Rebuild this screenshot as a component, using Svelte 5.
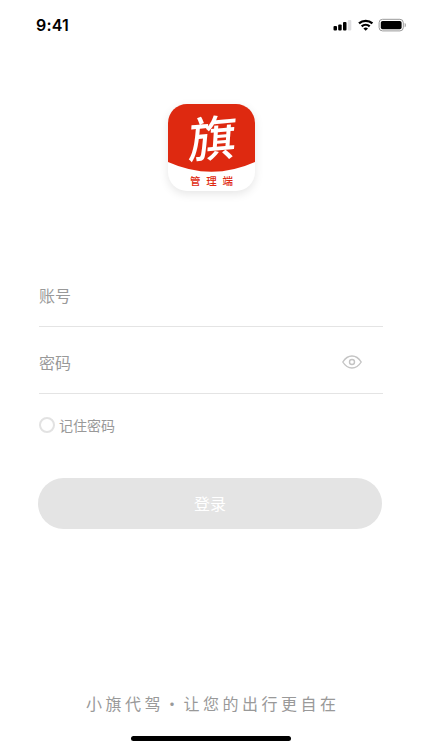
<script lang="ts">
	let account = $state('');
	let password = $state('');
	let remember = $state(false);
	let showPassword = $state(false);

	function handleSubmit(event: SubmitEvent) {
		event.preventDefault();
	}
</script>

<div class="screen">
	<header class="status-bar">
		<span class="time">9:41</span>
		<svg class="status-icons" width="74" height="14" viewBox="0 0 74 14" aria-hidden="true">
			<rect x="0.5" y="8" width="3.5" height="4.5" rx="1" />
			<rect x="5.2" y="6.5" width="3.5" height="6" rx="1" />
			<rect x="10" y="4" width="3.5" height="8.5" rx="1" />
			<rect x="14.8" y="2" width="3.5" height="10.5" rx="1" fill="#dedee0" />
			<g fill="none" stroke="#000" stroke-width="2.3">
				<path d="M26 5.4a10 10 0 0 1 13.4 0" />
				<path d="M28.7 8.4a6 6 0 0 1 8 0" />
			</g>
			<path d="M30.4 10.4a3.6 3.6 0 0 1 4.6 0L32.7 12.8z" />
			<rect x="46.1" y="1.3" width="24.2" height="11.6" rx="3.4" fill="none" stroke="#999" />
			<rect x="47.8" y="3" width="20.8" height="8.2" rx="1.8" />
			<path d="M71.7 5v4.2c1.5-.5 1.5-3.7 0-4.2" fill="#999" />
		</svg>
	</header>

	<div class="logo">
		<svg width="87" height="87" viewBox="0 0 87 87" role="img" aria-label="旗 管理端">
			<path d="M19 0H68A19 19 0 0 1 87 19V58Q43.5 77.5 0 58V19A19 19 0 0 1 19 0z" fill="#de2910" />
			<text class="logo-mark" transform="translate(19.5 54.5) skewY(-5) skewX(-4)">旗</text>
			<text class="logo-label" x="22" y="81">管理端</text>
		</svg>
	</div>

	<form onsubmit={handleSubmit}>
		<div class="field">
			<input type="text" placeholder="账号" bind:value={account} />
		</div>
		<div class="field">
			<input type={showPassword ? 'text' : 'password'} placeholder="密码" bind:value={password} />
			<button
				type="button"
				class="eye"
				aria-label="密码"
				onclick={() => (showPassword = !showPassword)}
			>
				<svg width="20" height="14" viewBox="0 0 20 14" fill="none" stroke="#c4c4c4" stroke-width="1.4">
					<path d="M.8 7C3 3.5 6.2 1 10 1s7 2.5 9.2 6C17 10.5 13.800 13 10 13S3 10.5.8 7z" />
					<circle cx="10" cy="7" r="2.5" />
				</svg>
			</button>
		</div>

		<label class="remember">
			<input type="checkbox" bind:checked={remember} />
			<span>记住密码</span>
		</label>

		<button type="submit" class="submit" class:ready={account && password}>登录</button>
	</form>

	<footer>
		<p>小旗代驾・让您的出行更自在</p>
		<div class="home-indicator"></div>
	</footer>
</div>

<style>
	:global(body) {
		background: #fff;
	}

	.screen {
		display: flex;
		flex-direction: column;
		box-sizing: border-box;
		height: 750px;
		overflow: hidden;
		background: #fff;
		font-family: 'Noto Sans CJK SC', sans-serif;
		color: #999;
	}

	.status-bar {
		display: flex;
		justify-content: space-between;
		align-items: center;
		height: 50px;
		padding: 0 15px 0 36px;
	}

	.time {
		font-family: Inter, sans-serif;
		font-size: 16px;
		font-weight: 600;
		letter-spacing: 0.2px;
		color: #000;
	}

	.logo {
		width: 87px;
		height: 87px;
		margin: 53.5px auto 0 167.5px;
		border-radius: 19px;
		background: #fff;
		box-shadow: 0 3px 10px rgba(0, 0, 0, 0.1);
	}

	.logo svg {
		display: block;
		overflow: visible;
	}

	.logo-mark {
		font-size: 48px;
		font-weight: 500;
		fill: #fff;
	}

	.logo-label {
		font-size: 10.5px;
		font-weight: 500;
		letter-spacing: 5.8px;
		fill: #de2910;
	}

	form {
		padding: 69.5px 39px 0;
	}

	.field {
		display: flex;
		align-items: center;
		box-sizing: border-box;
		height: 67px;
		padding-top: 4px;
		border-bottom: 1px solid #e4e4e4;
	}

	.field input {
		flex: 1;
		min-width: 0;
		height: 24px;
		padding: 0 0 1px;
		border: 0;
		outline: 0;
		background: none;
		font: inherit;
		font-size: 16px;
		color: #333;
	}

	.field input::placeholder {
		color: #999;
		opacity: 1;
	}

	.eye {
		display: flex;
		margin-right: 21px;
		padding: 0;
		border: 0;
		background: none;
	}

	.remember {
		display: flex;
		align-items: center;
		gap: 4px;
		height: 20px;
		margin-top: 21px;
		font-size: 14px;
		line-height: 20px;
	}

	.remember input {
		appearance: none;
		box-sizing: border-box;
		width: 16px;
		height: 16px;
		margin: 0;
		border: 2px solid #e2e2e2;
		border-radius: 50%;
	}

	.remember input:checked {
		background: #de2910;
	}

	.submit {
		display: block;
		width: 344px;
		height: 51px;
		margin: 43px 0 0 -1px;
		padding: 0 0 1px;
		border: 0;
		border-radius: 26px;
		background: #e4e4e4;
		font: inherit;
		font-size: 16px;
		font-weight: 400;
		color: #fff;
	}

	.submit.ready {
		background: #de2910;
	}

	footer {
		margin-top: auto;
		padding-bottom: 9px;
	}

	footer p {
		margin: 0 0 21px 86px;
		font-size: 16px;
		line-height: 24px;
		letter-spacing: 3.5px;
		white-space: nowrap;
	}

	.home-indicator {
		width: 160px;
		height: 5px;
		margin-left: 131px;
		border-radius: 3px;
		background: #000;
	}
</style>
